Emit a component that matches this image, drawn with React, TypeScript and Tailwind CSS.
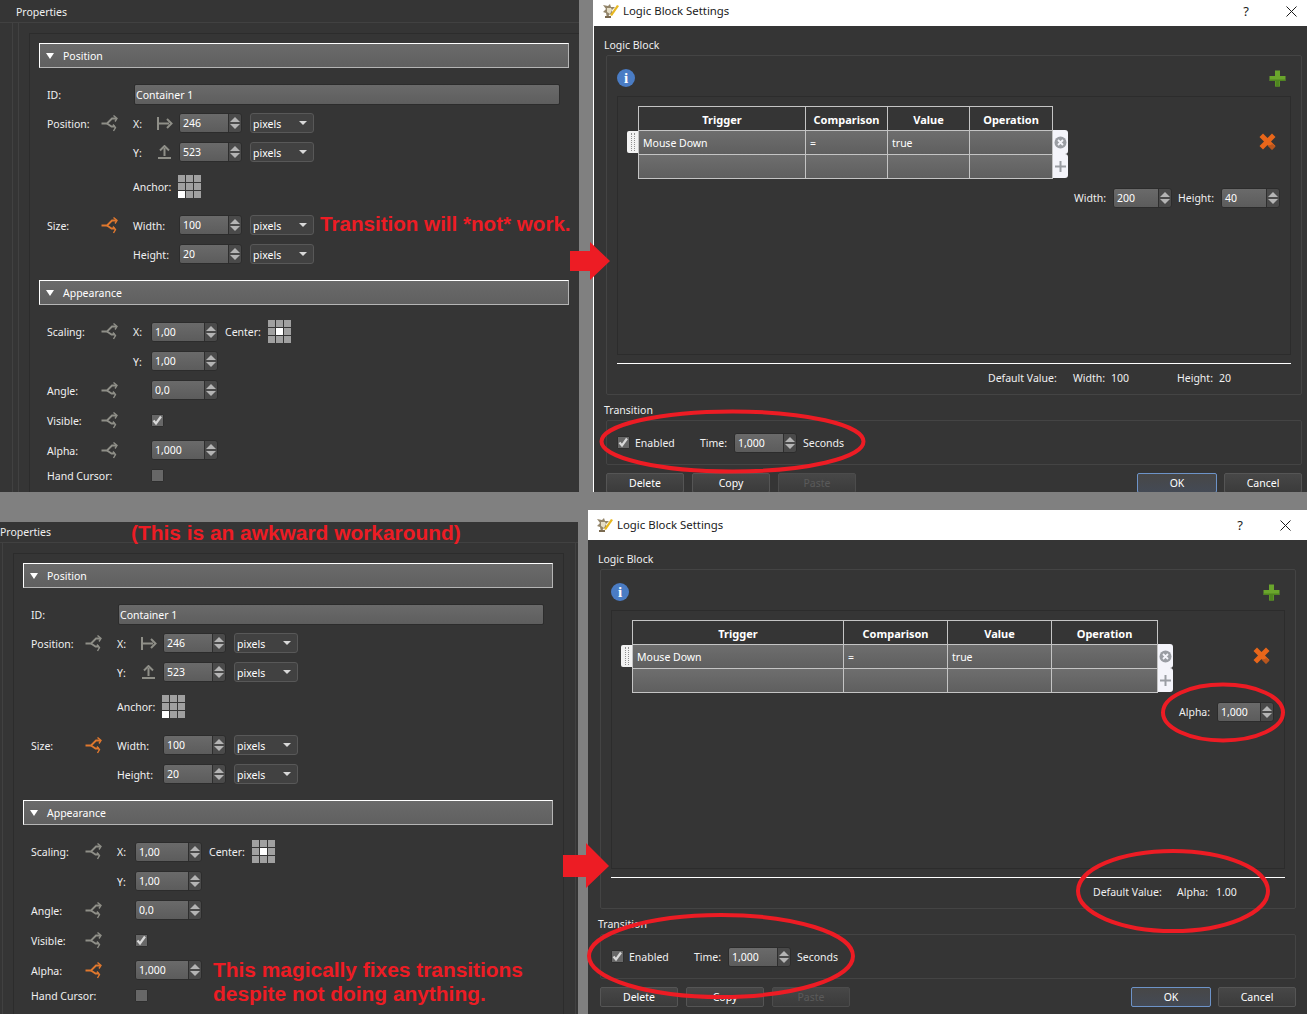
import type { ReactNode } from "react";

const RED = "#ed1c24";

function ShareIcon({ on = false }: { on?: boolean }) {
  const c = on ? "#e0782e" : "#8f8f88";
  return (
    <svg width="17" height="17" viewBox="0 0 17 17" fill="none" stroke={c} strokeWidth="1.800" className="shrink-0">
      <path d="M0.500 8.500h5.500l5-5h4" />
      <path d="M6 8.500l4.500 3h3.500" />
      <path d="M12.500 0.500l3.500 3-2 3" strokeWidth="1.400" />
      <path d="M12 9.500l2.500 3-2 3.500" strokeWidth="1.400" />
    </svg>
  );
}

function Spin({ value, w = "w-[63px]" }: { value: string; w?: string }) {
  return (
    <div className={`${w} h-[20px] flex rounded-[3px] border border-[#2c2c2c] bg-[#4a4a4a] overflow-hidden shrink-0`}>
      <div className="flex-1 bg-gradient-to-b from-[#6a6a6a] to-[#5c5c5c] pl-[3px] leading-[18px] text-white">{value}</div>
      <div className="w-[13px] border-l border-[#2e2e2e] flex flex-col items-center justify-center gap-[2px]">
        <div className="w-0 h-0 border-x-[5px] border-x-transparent border-b-[5px] border-b-[#b4b4b4]" />
        <div className="w-0 h-0 border-x-[5px] border-x-transparent border-t-[5px] border-t-[#b4b4b4]" />
      </div>
    </div>
  );
}

function Select() {
  return (
    <div className="w-[64px] h-[20px] ml-[8px] flex items-center justify-between rounded-[3px] border border-[#585858] bg-[#414141] pl-[2px] pr-[6px] text-white shrink-0">
      <span className="pt-[2px]">pixels</span>
      <div className="w-0 h-0 border-x-[4px] border-x-transparent border-t-[4px] border-t-[#d8d8d8]" />
    </div>
  );
}

function AnchorGrid({ active }: { active: number }) {
  return (
    <div className="grid grid-cols-[7px_7px_7px] grid-rows-[7px_7px_7px] gap-px shrink-0">
      {[0, 1, 2, 3, 4, 5, 6, 7, 8].map((i) => (
        <div key={i} className={i === active ? "bg-white" : "bg-[#a0a0a0]"} />
      ))}
    </div>
  );
}

function Check({ checked = false }: { checked?: boolean }) {
  return (
    <div className="w-[13px] h-[13px] flex items-center justify-center rounded-[1px] border border-[#2e2e2e] bg-[#676767] shrink-0">
      {checked && (
        <svg width="11" height="11" viewBox="0 0 11 11" fill="none" stroke="#d8d8d8" strokeWidth="2.200">
          <path d="M1.500 5.500l2.500 3 5-7" />
        </svg>
      )}
    </div>
  );
}

function SectionBar({ label, className = "" }: { label: string; className?: string }) {
  return (
    <div className={`w-[530px] h-[25px] flex items-center border border-t-white border-l-white border-r-[#b5b5b5] border-b-[#b5b5b5] bg-gradient-to-b from-[#6a6a6a] to-[#606060] text-white ${className}`}>
      <div className="ml-[6px] w-0 h-0 border-x-[4px] border-x-transparent border-t-[6px] border-t-white" />
      <span className="ml-[9px] pt-[2px]">{label}</span>
    </div>
  );
}

function Row({ label, icon, on, children, className = "h-[20px]" }: { label?: string; icon?: boolean; on?: boolean; children?: ReactNode; className?: string }) {
  return (
    <div className={`flex items-center [&>span]:pt-[2px] ${className}`}>
      <div className="w-[54px] pt-[2px] shrink-0 text-[#f0f0f0]">{label}</div>
      <div className="w-[32px] shrink-0">{icon && <ShareIcon on={on} />}</div>
      {children}
    </div>
  );
}

function Properties({ alphaOn = false }: { alphaOn?: boolean }) {
  return (
    <div className="w-[596px] h-[496px] bg-[#353535] font-['Noto_Sans',sans-serif] text-[10.5px] text-[#f0f0f0] leading-none">
      <div className="h-[23px] pl-[16px] pt-[7px] border-b border-[#414141]">Properties</div>
      <div className="flex h-[473px]">
        <div className="w-[13px] border-r border-[#414141]" />
        <div className="ml-[5px] flex-1 mr-[4px] pl-[10px] pr-[11px] pt-[10px] border-x border-[#414141]">
          <div className="h-[464px] border-x border-t border-[#2c2c2c] pl-[9px] pt-[9px]">
            <SectionBar label="Position" />
            <div className="mt-[16px] ml-[8px] flex items-center h-[21px]">
              <div className="w-[87px] pt-[2px]">ID:</div>
              <div className="w-[426px] h-[21px] rounded-[2px] border border-[#2c2c2c] bg-gradient-to-b from-[#6a6a6a] to-[#5e5e5e] pl-[1px] pt-[1px] leading-[19px] text-white">Container 1</div>
            </div>
            <div className="ml-[8px]">
              <Row label="Position:" icon className="h-[20px] mt-[8px]">
                <span className="w-[24px]">X:</span>
                <svg width="16" height="13" viewBox="0 0 16 13" fill="none" stroke="#8f8f88" strokeWidth="2" className="shrink-0">
                  <path d="M1 0v13M2 6.500h10" />
                  <path d="M10 2l4.500 4.500-4.500 4.500" />
                </svg>
                <div className="w-[6px] shrink-0" />
                <Spin value="246" />
                <Select />
              </Row>
              <Row className="h-[20px] mt-[9px]">
                <span className="w-[24px]">Y:</span>
                <svg width="16" height="14" viewBox="0 0 16 14" fill="none" stroke="#8f8f88" strokeWidth="2" className="shrink-0">
                  <path d="M1 13h13M7.500 3v8" />
                  <path d="M3 5.500l4.500-4.500 4.500 4.500" />
                </svg>
                <div className="w-[6px] shrink-0" />
                <Spin value="523" />
                <Select />
              </Row>
              <Row className="h-[23px] mt-[13px]">
                <span className="w-[45px]">Anchor:</span>
                <AnchorGrid active={6} />
              </Row>
              <Row label="Size:" icon on className="h-[20px] mt-[17px]">
                <span className="w-[46px]">Width:</span>
                <Spin value="100" />
                <Select />
              </Row>
              <Row className="h-[20px] mt-[9px]">
                <span className="w-[46px]">Height:</span>
                <Spin value="20" />
                <Select />
              </Row>
            </div>
            <SectionBar label="Appearance" className="mt-[16px]" />
            <div className="ml-[8px]">
              <Row label="Scaling:" icon className="h-[23px] mt-[15px]">
                <span className="w-[18px]">X:</span>
                <Spin value="1,00" w="w-[67px]" />
                <span className="ml-[7px] w-[43px]">Center:</span>
                <AnchorGrid active={4} />
              </Row>
              <Row className="h-[20px] mt-[8px]">
                <span className="w-[18px]">Y:</span>
                <Spin value="1,00" w="w-[67px]" />
              </Row>
              <Row label="Angle:" icon className="h-[20px] mt-[9px]">
                <span className="w-[18px]" />
                <Spin value="0,0" w="w-[67px]" />
              </Row>
              <Row label="Visible:" icon className="h-[20px] mt-[10px]">
                <span className="w-[18px]" />
                <Check checked />
              </Row>
              <Row label="Alpha:" icon on={alphaOn} className="h-[20px] mt-[10px]">
                <span className="w-[18px]" />
                <Spin value="1,000" w="w-[67px]" />
              </Row>
              <div className="flex items-center h-[13px] mt-[9px]">
                <span className="w-[104px] pt-[2px]">Hand Cursor:</span>
                <Check />
              </div>
            </div>
          </div>
        </div>
      </div>
    </div>
  );
}

function TitleIcon() {
  return (
    <svg width="16" height="16" viewBox="0 0 16 16" className="shrink-0">
      <path d="M0 2l5 1 2-2 1 3 4 0-3 3 1 5-3-1-3 4-1-5-3-1 3-3z" fill="#93856a" />
      <path d="M4 5h4l1 2-2 4-3-2z" fill="#e6dfc8" />
      <path d="M7 12l7-10 2 1-7 10z" fill="#e8b820" />
      <path d="M2 13h6v2h-6z" fill="#7a6a50" />
    </svg>
  );
}

function Plus() {
  return (
    <svg width="17" height="17" viewBox="0 0 17 17">
      <path d="M6 0.500h5v5.500h5.500v5h-5.500v5.500h-5v-5.500h-5.500v-5h5.500z" fill="#6aa52c" />
      <path d="M6.500 11h4v5.500h-4zM1 9.500h15v1.500h-15z" fill="#4f8420" />
    </svg>
  );
}

function Cross() {
  return (
    <svg width="17" height="17" viewBox="0 0 17 17">
      <path d="M4 0.500l4.500 4.500 4.500-4.500 3.500 3.500-4.500 4.500 4.500 4.500-3.500 3.500-4.500-4.500-4.500 4.500-3.500-3.500 4.500-4.500-4.500-4.500z" fill="#e8661a" />
      <path d="M12 12l1-1 3.500 2.500-3.500 3.500-4.500-4.500z" fill="#b8561e" />
    </svg>
  );
}

type Col = { width: string; head: string; cell?: string };

function LogicTable({ cols }: { cols: Col[] }) {
  const cellBg = "bg-gradient-to-b from-[#6e6e6e] to-[#5f5f5f]";
  return (
    <div className="flex">
      <div className="w-[11px] pt-[25px] shrink-0">
        <div className="h-[22px] flex justify-center rounded-l-[2px] bg-[#f2f2f2]">
          <div className="w-[4px] h-[18px] mt-[2px] border-x border-dotted border-[#909090]" />
        </div>
      </div>
      <div className="border-t border-l border-[#c4c4c4]">
        <div className="flex h-[24px]">
          {cols.map((c) => (
            <div key={c.head} className={`${c.width} pt-[2px] border-r border-b border-[#c4c4c4] flex items-center justify-center font-bold text-[11px] text-white`}>{c.head}</div>
          ))}
        </div>
        <div className="flex h-[24px]">
          {cols.map((c) => (
            <div key={c.head} className={`${c.width} ${cellBg} pt-[2px] border-r border-b border-[#c4c4c4] flex items-center pl-[4px] text-white`}>{c.cell}</div>
          ))}
        </div>
        <div className="flex h-[24px]">
          {cols.map((c) => (
            <div key={c.head} className={`${c.width} ${cellBg} border-r border-b border-[#c4c4c4]`} />
          ))}
        </div>
      </div>
      <div className="w-[15px] pt-[24px] shrink-0">
        <div className="h-[24px] flex items-center justify-center rounded-r-[3px] bg-[#f4f4fa]">
          <svg width="13" height="13" viewBox="0 0 13 13" fill="none">
            <circle cx="6.500" cy="6.500" r="6" fill="#9a9da3" />
            <path d="M4 4l5 5M9 4l-5 5" stroke="#f4f4fa" strokeWidth="1.800" />
          </svg>
        </div>
        <div className="h-[24px] flex items-center justify-center rounded-r-[3px] bg-[#f4f4fa]">
          <svg width="13" height="13" viewBox="0 0 13 13" fill="none" stroke="#9a9da3" strokeWidth="2">
            <path d="M6.500 1v11M1 6.500h11" />
          </svg>
        </div>
      </div>
    </div>
  );
}

function DialogButton({ label, className = "" }: { label: string; className?: string }) {
  return (
    <div className={`h-[20px] pt-[1px] flex items-center justify-center rounded-[2px] border bg-gradient-to-b from-[#474747] to-[#3b3b3b] ${className}`}>{label}</div>
  );
}

function LogicWindow({ cols, side, defaults }: { cols: Col[]; side: ReactNode; defaults: ReactNode }) {
  return (
    <div className="w-full h-[504px] bg-[#353535] font-['Noto_Sans',sans-serif] text-[10.5px] text-[#f0f0f0] leading-none">
      <div className="h-[30px] bg-white text-[#1a1a1a]">
        <div className="w-[713px] h-full flex items-center pl-[9px] text-[11.4px]">
          <TitleIcon />
          <span className="ml-[4px]">Logic Block Settings</span>
          <span className="ml-auto text-[13px]">?</span>
          <svg width="11" height="11" viewBox="0 0 11 11" stroke="#1a1a1a" fill="none" className="ml-[37px] mr-[10px]">
            <path d="M0.500 0.500l10 10M10.500 0.500l-10 10" />
          </svg>
        </div>
      </div>
      <div className="w-[713px]">
        <div className="h-[29px] pl-[10px] pt-[14px]">Logic Block</div>
        <div className="ml-[12px] mr-[5px] h-[340px] border border-[#444] rounded-[2px]">
          <div className="h-[40px] pt-[4px] pl-[10px] pr-[15px] flex items-center justify-between">
            <div className="w-[18px] h-[18px] flex items-center justify-center rounded-full bg-[#4a7cc4] font-['Liberation_Serif',serif] font-bold text-[15px] text-white">i</div>
            <Plus />
          </div>
          <div className="ml-[10px] mr-[10px] h-[259px] border border-[#2c2c2c] pt-[9px] pl-[9px]">
            <div className="flex items-start">
              <LogicTable cols={cols} />
              <div className="ml-auto mr-[14px] mt-[27px]"><Cross /></div>
            </div>
            {side}
          </div>
          <div className="ml-[10px] mr-[10px] mt-[8px] h-px bg-white" />
          {defaults}
        </div>
        <div className="h-[25px] pl-[10px] pt-[10px]">Transition</div>
        <div className="ml-[12px] mr-[5px] h-[45px] border border-[#444] rounded-[2px] flex items-center pl-[10px]">
          <Check checked />
          <span className="ml-[5px] pt-[2px] w-[65px]">Enabled</span>
          <span className="w-[34px] pt-[2px]">Time:</span>
          <Spin value="1,000" />
          <span className="ml-[6px] pt-[2px]">Seconds</span>
        </div>
        <div className="mt-[8px] ml-[12px] mr-[5px] flex text-white">
          <DialogButton label="Delete" className="w-[78px] border-[#555]" />
          <DialogButton label="Copy" className="w-[78px] ml-[8px] border-[#555]" />
          <DialogButton label="Paste" className="w-[78px] ml-[8px] border-[#4c4c4c] text-[#5a5a5a]" />
          <DialogButton label="OK" className="w-[80px] ml-auto border-[#6d93c8] from-[#4d5563] to-[#444a55]" />
          <DialogButton label="Cancel" className="w-[78px] ml-[7px] border-[#555]" />
        </div>
      </div>
    </div>
  );
}

const topCols: Col[] = [
  { width: "w-[167px]", head: "Trigger", cell: "Mouse Down" },
  { width: "w-[82px]", head: "Comparison", cell: "=" },
  { width: "w-[82px]", head: "Value", cell: "true" },
  { width: "w-[83px]", head: "Operation" },
];

const bottomCols: Col[] = [
  { width: "w-[211px]", head: "Trigger", cell: "Mouse Down" },
  { width: "w-[104px]", head: "Comparison", cell: "=" },
  { width: "w-[104px]", head: "Value", cell: "true" },
  { width: "w-[106px]", head: "Operation" },
];

function Ovals() {
  return (
    <svg width="1307" height="1014" viewBox="0 0 1307 1014" className="absolute left-0 top-0 pointer-events-none">
      <g fill="none" stroke={RED} strokeWidth="4">
        <ellipse cx="732.500" cy="441.500" rx="131" ry="30" />
        <ellipse cx="721" cy="956" rx="132" ry="41" />
        <ellipse cx="1223" cy="712.500" rx="60" ry="28" />
        <ellipse cx="1173" cy="891" rx="95" ry="40" />
      </g>
      <path d="M570 251h20v-9l20 19-20 19v-9h-20z" fill={RED} />
      <path d="M563 855h23v-12l23 23-23 22v-11h-23z" fill={RED} />
    </svg>
  );
}

export default function App() {
  return (
    <div className="relative w-[1307px] h-[1014px] bg-[#808080] overflow-hidden">
      <div className="absolute left-0 top-0 w-[579px] h-[492px] overflow-hidden">
        <Properties />
      </div>
      <div className="absolute left-[593px] top-0 w-[714px] h-[492px] overflow-hidden border-l border-white">
        <div className="-mt-[4px]">
          <LogicWindow
            cols={topCols}
            side={
              <div className="flex items-center justify-end mr-[10px] mt-[9px] h-[20px]">
                <span className="w-[39px]">Width:</span>
                <Spin value="200" w="w-[59px]" />
                <span className="ml-[6px] w-[43px]">Height:</span>
                <Spin value="40" w="w-[59px]" />
              </div>
            }
            defaults={
              <div className="ml-[381px] mt-[9px] flex">
                <span className="w-[85px]">Default Value:</span>
                <span className="w-[38px]">Width:</span>
                <span className="w-[66px]">100</span>
                <span className="w-[42px]">Height:</span>
                <span>20</span>
              </div>
            }
          />
        </div>
      </div>
      <div className="absolute left-0 top-[522px] w-[578px] h-[492px] overflow-hidden">
        <div className="-ml-[16px] -mt-[2px]">
          <Properties alphaOn />
        </div>
      </div>
      <div className="absolute left-[588px] top-[510px] w-[719px] h-[504px]">
        <LogicWindow
          cols={bottomCols}
          side={
            <div className="flex items-center justify-end mr-[10px] mt-[9px] h-[20px]">
              <span className="w-[38px]">Alpha:</span>
              <Spin value="1,000" w="w-[57px]" />
            </div>
          }
          defaults={
            <div className="ml-[492px] mt-[9px] flex">
              <span className="w-[84px]">Default Value:</span>
              <span className="w-[39px]">Alpha:</span>
              <span>1.00</span>
            </div>
          }
        />
      </div>
      <Ovals />
      <div className="absolute left-[320px] top-[211px] font-['Liberation_Sans',sans-serif] font-bold text-[20.6px] leading-[26px] text-[#ed1c24] whitespace-nowrap">Transition will *not* work.</div>
      <div className="absolute left-[131px] top-[520px] font-['Liberation_Sans',sans-serif] font-bold text-[20.9px] leading-[26px] text-[#ed1c24] whitespace-nowrap">(This is an awkward workaround)</div>
      <div className="absolute left-[213px] top-[958px] font-['Liberation_Sans',sans-serif] font-bold text-[20.9px] leading-[24px] text-[#ed1c24] whitespace-nowrap">
        This magically fixes transitions
        <br />
        despite not doing anything.
      </div>
    </div>
  );
}
